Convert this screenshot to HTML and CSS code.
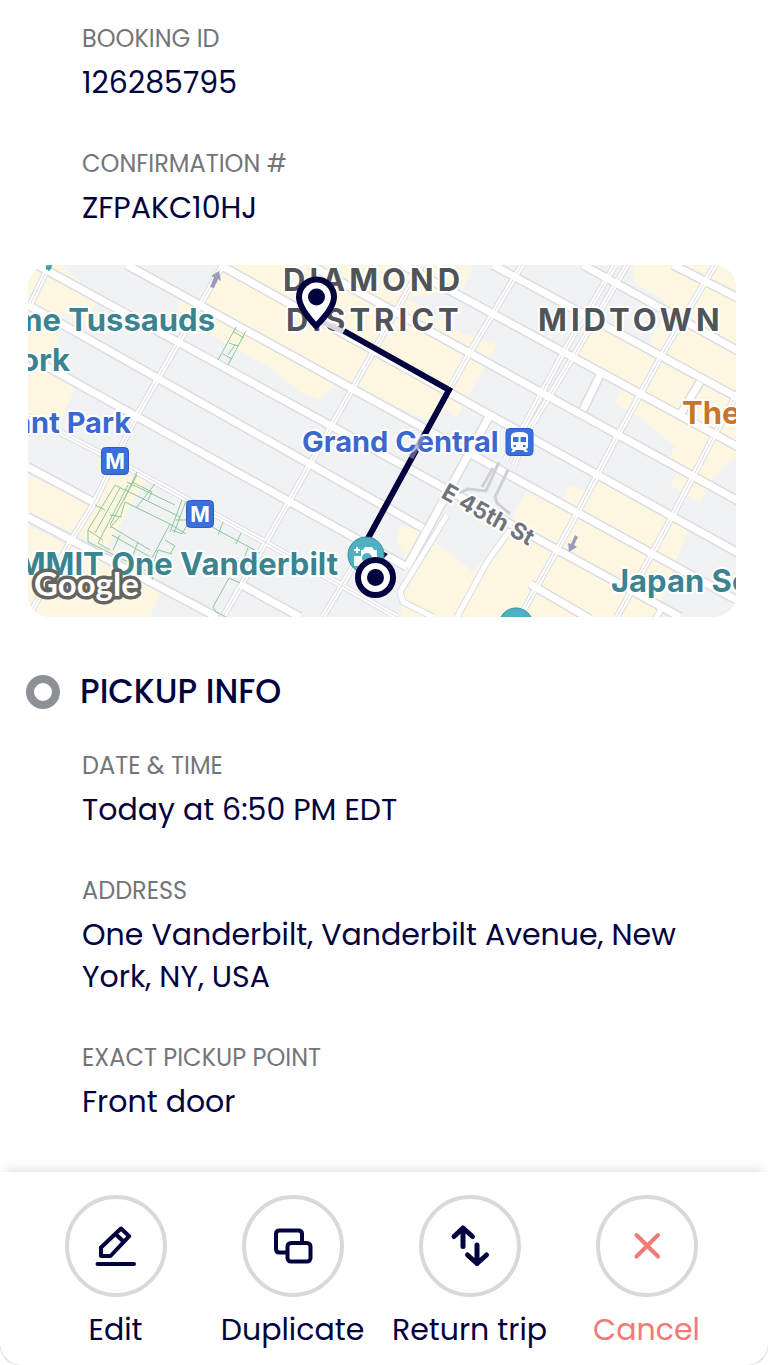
FILE: index.html
```html
<!DOCTYPE html>
<html lang="en">
<head>
  <meta charset="UTF-8" />
  <meta name="viewport" content="width=device-width, initial-scale=1.0" />
  <title>Booking details</title>
  <link rel="stylesheet" href="styles.css">
</head>
<body>
  <main class="booking">
    <dl class="fields">
      <div class="field">
        <dt>BOOKING ID</dt>
        <dd>126285795</dd>
      </div>
      <div class="field">
        <dt>CONFIRMATION #</dt>
        <dd>ZFPAKC10HJ</dd>
      </div>
    </dl>

    <svg class="map" viewBox="28 265 708 352" role="img" aria-label="Route map">
      <defs>
        <path id="streets" d="M28 260L680 617M127 265L740 602M220 265L740 554M310 265L740 502M403 265L740 448M493 265L740 399M583 265L740 352M673 265L740 299M28 305L423 528M28 356L407 567M28 467L93 502M240 584L300 617M28 517L217 617M490 415L407 567M600 375L583 410M700 382L680 415M530 584L590 619" />
        <path id="avenues" d="M47 270L30 305M223 265L137 415L93 505L70 542L28 617M422 265L332 425L287 505L223 617M522 265L470 352L450 388M360 555L323 617M615 265L563 353L523 428L505 460M627 265L573 357L530 428L514 465M715 265L660 358L617 437L580 508L557 550L520 617M750 370L713 438L673 515L653 552L617 617M28 416L137 472L265 542L397 617" />
        <path id="lanes" d="M510 530L487 562L457 617M447 515L400 592L403 602L433 617M663 606L655 620" />
      </defs>
      <rect x="28" y="265" width="708" height="352" fill="#f1f2f4" />

      <!-- busy areas -->
      <g fill="#fdf7e1">
        <path d="M28 265H62L97 300L86 322L62 312L60 335L48 362L75 388L56 432L28 420Z" />
        <path d="M220 265H473L464 288L407 298L460 332L497 345L480 375L457 417L440 407L427 420L355 388L338 382L320 400L300 392L270 368L230 345L175 315L182 296L205 300Z" />
        <path d="M633 265H736V455L713 478L700 503L670 485L677 473L694 472L670 457L675 446L640 418L615 403L622 388L640 392L575 357L585 318L648 352L652 335L672 310L660 298L633 282Z" />
        <path d="M527 490L562 506L568 485L588 492L600 477L673 515L687 532L655 617H402L400 600L435 542L473 572L500 540Z" />
        <path d="M400 525L423 532L407 562L397 540Z" />
        <path d="M28 475L93 505L112 475L147 478L107 548L28 512Z" />
        <path d="M28 525L160 592L150 617H28Z" />
      </g>

      <!-- roads: grey casing first, white on top -->
      <use href="#streets" class="road casing-wide" />
      <use href="#avenues" class="road casing" />
      <use href="#lanes" class="road casing" />
      <use href="#lanes" class="road lane" />
      <use href="#avenues" class="road lane" />
      <use href="#avenues" class="road centre" />
      <use href="#streets" class="road street-fill" />
      <path class="road ramp" d="M499 462L486 491L468 489L459 493M508 470L495 497L497 503L510 514M493 468L482 487" />

      <!-- park paths -->
      <g fill="none" stroke="#8cc79b">
        <path d="M115 485L88 530L88 542L150 573M120 488L95 533M128 485L98 543M137 475L110 525M115 485L180 517M127 482L175 505M137 472L124 500M155 484L136 508M132 482L152 492L148 500M125 502L170 524L152 558L112 535M110 526L150 550M125 502L121 515L110 528M110 515L122 517M98 543L110 550M105 510L95 505M182 500L170 532M186 501L174 533M176 520L190 520L182 534L172 530M170 524L186 534M88 530L103 540M113 550L120 535M133 555L138 542M150 573L158 550L172 554M165 540L175 546L170 554M212 527L260 553M223 522L218 535M241 533L236 544M248 548L240 568M229 578L213 607L216 612L226 617M229 578L240 583M155 570L152 580" />
        <path d="M236 327L218 360M246 331L228 365M234 332L244 338M229 343L238 346M223 354L232 359M235 345L228 355" />
      </g>

      <!-- one-way arrows -->
      <g fill="#9b9cbc">
        <path d="M210 287L214 277L211 276L219 271L221 281L218 279L214 288Z" />
        <path d="M575 535L571 544L568 543L569 552L577 547L574 545L578 537Z" />
      </g>
      <path d="M46 265H52L51 269L49 271L46 269Z" fill="#3f9fae" />
      <circle cx="516" cy="625" r="17" fill="#4db1c2" stroke="#3b909d" />

      <g class="place teal">
        <text x="215" y="331" text-anchor="end">Madame Tussauds</text>
        <text x="70" y="371" text-anchor="end">New York</text>
        <text x="338" y="575" text-anchor="end">SUMMIT One Vanderbilt</text>
        <text x="611" y="592">Japan Society</text>
      </g>
      <text class="place orange" x="682" y="424">The</text>
      <g class="place district">
        <text x="283" y="291">DIAMOND</text>
        <text x="286" y="331">DISTRICT</text>
        <text x="538" y="331">MIDTOWN</text>
      </g>
      <text class="place street" transform="translate(440 497) rotate(29)">E 45th St</text>

      <!-- route -->
      <path d="M320 321L346 333" fill="none" stroke="#d5d6e2" stroke-width="5" />
      <path d="M344 331L449 390L366 542" fill="none" stroke="#02023f" stroke-width="6" />
      <g class="place blue">
        <text x="131" y="433" text-anchor="end">Bryant Park</text>
        <text x="302" y="452">Grand Central</text>
      </g>
      <path d="M423 436L411 458" stroke="#8f93b5" stroke-width="5" opacity=".6" />

      <!-- stations -->
      <g fill="#3a70dd" stroke="#2c5cc0">
        <rect x="101.500" y="447.500" width="27" height="27" rx="4" />
        <rect x="186.500" y="500.500" width="27" height="27" rx="4" />
        <rect x="506" y="428.500" width="27" height="27" rx="4" />
      </g>
      <g class="metro">
        <text x="115" y="469" text-anchor="middle">M</text>
        <text x="200" y="522" text-anchor="middle">M</text>
      </g>
      <path d="M511 436Q511 432 519.500 432T528 436V447Q528 449 526 449L528 452H525L523 450H516L514 452H511L513 449Q511 449 511 447Z" fill="#fff" />
      <path d="M513 437H518.500V442H513ZM520.500 437H526V442H520.500ZM513.500 445H516V447H513.500ZM523 445H525.500V447H523Z" fill="#3a70dd" />

      <!-- viewpoint -->
      <path d="M382 551L388 554L382 560Z" fill="#02023f" />
      <circle cx="366" cy="555" r="18" fill="#4db1c2" stroke="#3b909d" />
      <path d="M354 549H356V547H358V549H360V551H358V553H356V551H354ZM363 550L365 547H372L374 550H377V566H354V556H361V550Z" fill="#fff" />
      <circle cx="367" cy="558" r="5" fill="#4db1c2" />

      <!-- pickup and dropoff markers -->
      <circle cx="375.500" cy="577.500" r="17.500" fill="#fff" stroke="#02023f" stroke-width="6" />
      <circle cx="375.500" cy="577.500" r="8.500" fill="#02023f" />
      <path d="M316 326Q299 308 299 297A17.500 17.500 0 0 1 334 297Q334 308 316 326Z" fill="#fff" stroke="#02023f" stroke-width="6" />
      <circle cx="316.500" cy="297" r="8.500" fill="#02023f" />

      <text class="google" x="34" y="596">Google</text>
    </svg>

    <section>
      <h2 class="section-title"><span class="ring"></span>PICKUP INFO</h2>
      <dl class="fields">
        <div class="field">
          <dt>DATE &amp; TIME</dt>
          <dd>Today at 6:50 PM EDT</dd>
        </div>
        <div class="field">
          <dt>ADDRESS</dt>
          <dd>One Vanderbilt, Vanderbilt Avenue, New York, NY, USA</dd>
        </div>
        <div class="field">
          <dt>EXACT PICKUP POINT</dt>
          <dd>Front door</dd>
        </div>
      </dl>
    </section>
  </main>

  <nav class="actions">
    <button class="action" type="button">
      <span class="circle">
        <svg viewBox="0 0 48 48"><path d="M5.500 42H42M29 6.500L37.200 14.200L18.500 34H9V25.500ZM23.500 12L32 20" /></svg>
      </span>
      Edit
    </button>
    <button class="action" type="button">
      <span class="circle">
        <svg viewBox="0 0 48 48"><rect x="18.500" y="21" width="23" height="18.500" rx="3.500" /><path d="M18 30.500H10.500Q7 30.500 7 27V12Q7 8.500 10.500 8.500H29.500Q33 8.500 33 12V20" /></svg>
      </span>
      Duplicate
    </button>
    <button class="action" type="button">
      <span class="circle">
        <svg class="bold" viewBox="0 0 48 48"><path d="M17 24.500V6M8 14.500L17 6L26.500 14.500M31 23V41.500M21.500 33L31 41.500L40.500 33" /></svg>
      </span>
      Return trip
    </button>
    <button class="action cancel" type="button">
      <span class="circle">
        <svg viewBox="0 0 48 48"><path d="M13.500 13L35 34.500M35 13L13.500 34.500" /></svg>
      </span>
      Cancel
    </button>
  </nav>
</body>
</html>
```

FILE: styles.css
```css
* { box-sizing: border-box; }
body {
  margin: 0;
  min-height: 100vh;
  display: flex;
  flex-direction: column;
  font-family: Poppins, Inter, sans-serif;
  color: #02023f;
  background: #fff;
}
.booking {
  flex: 1;
  padding: 21px 32px 48px 28px;
}
.fields {
  display: flex;
  flex-direction: column;
  gap: 42px;
  margin: 0;
  padding: 0 32px 0 54px;
}
.field dt {
  font-size: 24px;
  line-height: 36px;
  margin-bottom: 5px;
  color: #747579;
}
.field dd {
  margin: 0;
  font-size: 30px;
  line-height: 42px;
}
.map {
  display: block;
  width: 100%;
  margin: 36px 0 54px;
  border-radius: 22px;
}
.road { fill: none; stroke: #fff; }
.casing-wide { stroke: #dcdde2; stroke-width: 10px; }
.casing { stroke: #dcdde2; stroke-width: 7px; }
.lane { stroke-width: 5px; }
.centre { stroke: #dcdde2; stroke-width: 1px; }
.street-fill { stroke-width: 7px; }
.ramp { stroke: #cfd0d3; stroke-width: 3px; }
.place {
  font-family: Inter, sans-serif;
  font-size: 31px;
  font-weight: 700;
  stroke: #fff;
  stroke-width: 4px;
  stroke-linejoin: round;
  paint-order: stroke;
}
.teal { fill: #3b848f; }
.blue { fill: #3b67cf; font-size: 29px; }
.orange { fill: #c8752b; }
.district { fill: #505358; letter-spacing: 4px; }
.street { fill: #707378; font-size: 23px; }
.metro {
  font-family: Inter, sans-serif;
  font-size: 21px;
  font-weight: 700;
  fill: #fff;
}
.google {
  font-family: Lato, sans-serif;
  font-size: 33px;
  font-weight: 700;
  fill: #fff;
  stroke: #66645f;
  stroke-width: 7px;
  stroke-linejoin: round;
  paint-order: stroke;
}
.section-title {
  display: flex;
  align-items: center;
  gap: 20px;
  margin: 0 0 35px;
  font-size: 33px;
  line-height: 42px;
  font-weight: 500;
}
.ring {
  width: 34px;
  height: 34px;
  margin-left: -2px;
  border: 8px solid #8d9196;
  border-radius: 50%;
}
.actions {
  position: sticky;
  bottom: 0;
  display: grid;
  grid-template-columns: repeat(4, 1fr);
  padding: 23px 33px 14px 27px;
  background: #fff;
  border-radius: 0 0 20px 20px;
  box-shadow: 0 -6px 12px -4px rgba(0, 0, 0, 0.12);
  overflow: hidden;
}
/* thin line round the bottom corners */
.actions::after {
  content: "";
  position: absolute;
  left: -1px;
  right: -1px;
  bottom: -1px;
  height: 24px;
  border: 1px solid #bbb;
  border-top: 0;
  border-radius: 0 0 22px 22px;
  pointer-events: none;
}
.action {
  display: flex;
  flex-direction: column;
  align-items: center;
  gap: 12px;
  padding: 0;
  border: none;
  background: none;
  font-family: inherit;
  font-size: 30px;
  line-height: 42px;
  color: inherit;
  white-space: nowrap;
  cursor: pointer;
}
.circle {
  display: flex;
  align-items: center;
  justify-content: center;
  width: 102px;
  height: 102px;
  border: 4px solid #dbd7da;
  border-radius: 50%;
}
.circle svg {
  width: 48px;
  height: 48px;
  fill: none;
  stroke: currentColor;
  stroke-width: 4;
  stroke-linecap: round;
  stroke-linejoin: round;
}
.circle .bold { stroke-width: 5; }
.cancel { color: #f17a76; }
```
